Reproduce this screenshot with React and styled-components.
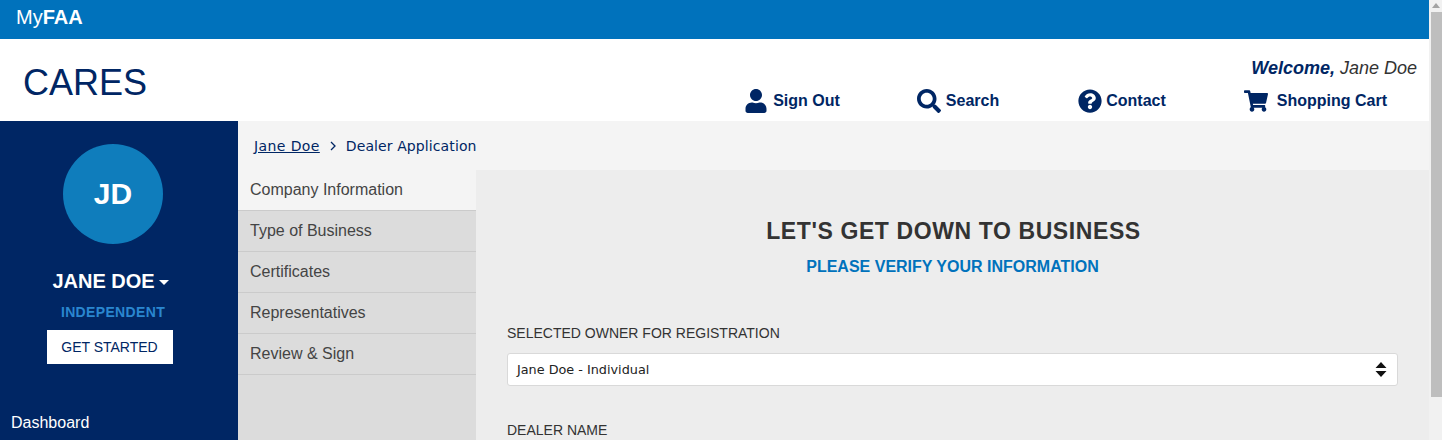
import React from 'react';
import styled, { createGlobalStyle } from 'styled-components';
import { FaUser, FaSearch, FaQuestionCircle, FaShoppingCart } from 'react-icons/fa';

const Global = createGlobalStyle`
  html, body { margin: 0; padding: 0; height: 440px; overflow: hidden; background: #fff; }
  body { font-family: "Liberation Sans", Arial, sans-serif; }
  * { box-sizing: border-box; }
`;

const Page = styled.div`display: flex; width: 1442px; height: 440px; overflow: hidden;`;
const Content = styled.div`flex: 1; min-width: 0; display: flex; flex-direction: column;`;

const ScrollTrack = styled.div`
  width: 13px; flex: none; background: #f1f1f1; padding: 12px 0 0 2px; position: relative;
`;
const ScrollArrow = styled.div`
  position: absolute; top: 3px; left: 3px; width: 0; height: 0;
  border-left: 4px solid transparent; border-right: 4px solid transparent; border-bottom: 5px solid #a3a3a3;
`;
const ScrollThumb = styled.div`height: 385px; background: #bebebe;`;

const TopBar = styled.div`
  height: 39px; flex: none; background: #0072bc;
  color: #fff; font-size: 20px; line-height: 35px; padding-left: 16px;
  b { font-weight: 700; }
`;

const Header = styled.header`
  height: 82px; flex: none; background: #fff; display: flex; justify-content: space-between; padding: 0 12px 0 23px;
`;
const Title = styled.h1`
  margin: 22px 0 0; font-size: 36px; font-weight: 400; line-height: 44px; color: #002664;
`;
const HeaderRight = styled.div`display: flex; flex-direction: column; align-items: flex-end;`;
const Welcome = styled.div`
  margin-top: 18px; font-size: 18px; line-height: 22px; font-style: italic; color: #333;
  b { color: #002664; font-weight: 700; }
`;
const Nav = styled.nav`display: flex; align-items: center; margin: 10px 30px 0 0;`;
const NavItem = styled.a`
  display: flex; align-items: center; gap: ${p => p.$gap}px; margin-left: ${p => p.$ml}px;
  color: #002664; font-size: 16px; font-weight: 700; line-height: 24px;
  svg { width: 24px; height: 24px; flex: none; }
`;

const Body = styled.div`flex: 1; display: flex; min-height: 0;`;

const Sidebar = styled.aside`
  width: 238px; flex: none; background: #002664; display: flex; flex-direction: column; align-items: center; color: #fff;
  padding-right: 12px;
`;
const Avatar = styled.div`
  width: 100px; height: 100px; margin-top: 23px; border-radius: 50%; background: #0f7dbc;
  display: flex; align-items: center; justify-content: center;
  font-size: 30px; font-weight: 700; color: #fff;
`;
const UserName = styled.div`
  margin-top: 26px; font-size: 20px; line-height: 22px; font-weight: 700; display: flex; align-items: center; gap: 4px;
  margin-left: -5px;
`;
const Caret = styled.span`
  width: 0; height: 0; margin-top: 3px; border-left: 5px solid transparent; border-right: 5px solid transparent; border-top: 5px solid #fff;
`;
const Role = styled.div`
  margin-top: 11px; font-size: 14px; line-height: 18px; font-weight: 700; color: #2a87d0; letter-spacing: 0.35px;
`;
const StartButton = styled.button`
  margin: 9px 0 0 -7px; width: 126px; height: 34px; border: 0; background: #fff; color: #002664; padding: 0;
  font: 400 14px "Liberation Sans", Arial, sans-serif;
`;
const SideLink = styled.a`
  align-self: flex-start; margin: 49px 0 0 11px; font-size: 16px; line-height: 20px; color: #fff;
`;

const Right = styled.div`flex: 1; min-width: 0; display: flex; flex-direction: column;`;
const Crumbs = styled.div`
  height: 49px; flex: none; background: #f4f4f4; display: flex; align-items: center; padding: 0 0 0 16px;
  font-family: "DejaVu Sans", sans-serif; font-size: 14px; color: #002664; letter-spacing: 0.1px;
  a { color: #002664; text-decoration: underline; letter-spacing: 0.4px; }
`;
const Chevron = styled.svg`width: 8px; height: 10px; margin: 0 9px 0 9px; flex: none;`;

const Split = styled.div`flex: 1; display: flex; min-height: 0;`;
const Steps = styled.ul`
  width: 238px; flex: none; margin: 0; padding: 0; list-style: none; background: #dcdcdc;
`;
const Step = styled.li`
  height: 41px; padding: 0 0 0 12px; display: flex; align-items: center;
  font-size: 16px; color: #444; border-bottom: 1px solid #cbcbcb;
  background: ${p => p.$active ? '#f4f4f4' : 'transparent'};
`;
const Main = styled.main`
  flex: 1; min-width: 0; background: #ededed; padding: 0 31px;
`;
const Heading = styled.h2`
  margin: 47px 0 0; padding-left: 2px; text-align: center; font-size: 23px; line-height: 28px; font-weight: 700; color: #333; letter-spacing: 0.6px;
`;
const Sub = styled.h3`
  margin: 12px 0 0; text-align: center; font-size: 16px; line-height: 20px; font-weight: 700; color: #0072bc;
`;
const Label = styled.label`
  display: block; font-size: 14px; line-height: 18px; color: #333; margin-top: ${p => p.$mt}px;
`;
const SelectBox = styled.div`
  margin-top: 11px; height: 33px; background: #fff; border: 1px solid #d9d9d9; border-radius: 3px;
  display: flex; align-items: center; justify-content: space-between; padding: 0 9px;
  font-family: "DejaVu Sans", sans-serif; font-size: 12.8px; color: #222;
`;
const Updown = styled.svg`width: 12px; height: 15px; flex: none; margin-right: 1px;`;

const App = () => (
  <Page>
    <Global />
    <Content>
      <TopBar>My<b>FAA</b></TopBar>
      <Header>
        <Title>CARES</Title>
        <HeaderRight>
          <Welcome><b>Welcome,</b> Jane Doe</Welcome>
          <Nav>
            <NavItem $gap={5} $ml={0}><FaUser />Sign Out</NavItem>
            <NavItem $gap={5} $ml={77}><FaSearch />Search</NavItem>
            <NavItem $gap={4} $ml={79}><FaQuestionCircle />Contact</NavItem>
            <NavItem $gap={9} $ml={78}><FaShoppingCart />Shopping Cart</NavItem>
          </Nav>
        </HeaderRight>
      </Header>
      <Body>
        <Sidebar>
          <Avatar>JD</Avatar>
          <UserName>JANE DOE <Caret /></UserName>
          <Role>INDEPENDENT</Role>
          <StartButton>GET STARTED</StartButton>
          <SideLink>Dashboard</SideLink>
        </Sidebar>
        <Right>
          <Crumbs>
            <a>Jane Doe</a>
            <Chevron viewBox="0 0 8 10"><path d="M2 1l4 4-4 4" fill="none" stroke="#002664" strokeWidth="1.3" /></Chevron>
            Dealer Application
          </Crumbs>
          <Split>
            <Steps>
              <Step $active>Company Information</Step>
              <Step>Type of Business</Step>
              <Step>Certificates</Step>
              <Step>Representatives</Step>
              <Step>Review &amp; Sign</Step>
            </Steps>
            <Main>
              <Heading>LET'S GET DOWN TO BUSINESS</Heading>
              <Sub>PLEASE VERIFY YOUR INFORMATION</Sub>
              <Label $mt={47}>SELECTED OWNER FOR REGISTRATION</Label>
              <SelectBox>
                Jane Doe - Individual
                <Updown viewBox="0 0 12 15"><path d="M6 0l5.5 6H.5zM6 15L.5 9h11z" fill="#111" /></Updown>
              </SelectBox>
              <Label $mt={35}>DEALER NAME</Label>
            </Main>
          </Split>
        </Right>
      </Body>
    </Content>
    <ScrollTrack>
      <ScrollArrow />
      <ScrollThumb />
    </ScrollTrack>
  </Page>
);

export default App;
